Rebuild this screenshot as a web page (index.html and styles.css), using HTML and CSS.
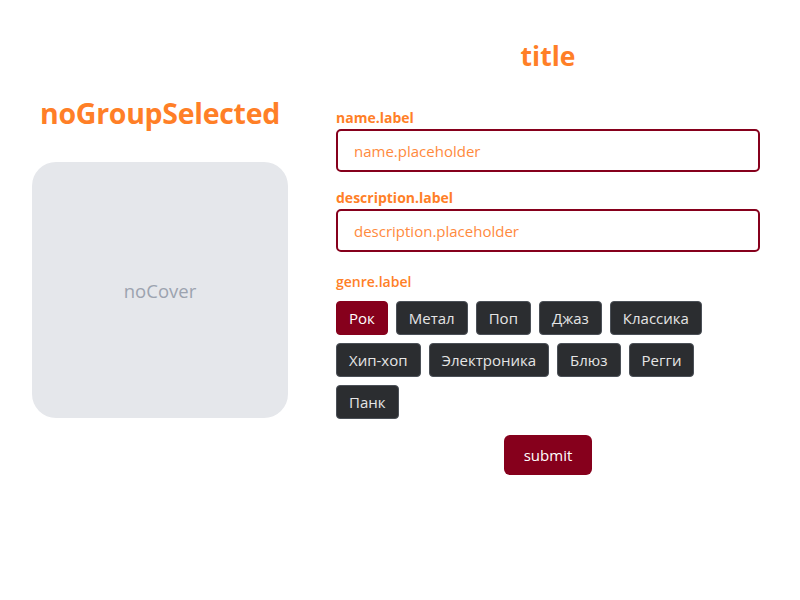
FILE: index.html
```html
<!DOCTYPE html>
<html>
<head>
<meta charset="utf-8">
<link rel="stylesheet" href="styles.css">
</head>
<body>
<div class="page">
  <div class="left">
    <h2 class="group-title">noGroupSelected</h2>
    <div class="cover">noCover</div>
  </div>
  <form class="right">
    <h1 class="title">title</h1>
    <div class="field">
      <label class="label">name.label</label>
      <input class="input" type="text" placeholder="name.placeholder">
    </div>
    <div class="field">
      <label class="label">description.label</label>
      <input class="input" type="text" placeholder="description.placeholder">
    </div>
    <div class="field genres-field">
      <label class="label light">genre.label</label>
      <div class="genres">
        <button type="button" class="genre active">Рок</button>
        <button type="button" class="genre">Метал</button>
        <button type="button" class="genre">Поп</button>
        <button type="button" class="genre">Джаз</button>
        <button type="button" class="genre">Классика</button>
        <button type="button" class="genre">Хип-хоп</button>
        <button type="button" class="genre">Электроника</button>
        <button type="button" class="genre">Блюз</button>
        <button type="button" class="genre">Регги</button>
        <button type="button" class="genre">Панк</button>
      </div>
    </div>
    <div class="actions">
      <button type="button" class="submit">submit</button>
    </div>
  </form>
</div>
</body>
</html>
```
FILE: styles.css
```css
* { box-sizing: border-box; }
html, body { margin: 0; padding: 0; background: #fff; }
body {
  font-family: "Open Sans", "Noto Sans", sans-serif;
  width: 800px;
  height: 600px;
}
.page {
  display: flex;
  align-items: center;
  gap: 48px;
  padding: 38px 40px 0 32px;
}
.left {
  width: 256px;
  display: flex;
  flex-direction: column;
  align-items: center;
}
.group-title {
  margin: 0 0 31px;
  font-size: 28.5px;
  font-weight: 700;
  color: #ff7f27;
  line-height: 36px;
  letter-spacing: -0.3px;
}
.cover {
  width: 256px;
  height: 256px;
  border-radius: 24px;
  background: #e5e7eb;
  color: #9ca3af;
  font-size: 18.5px;
  display: flex;
  align-items: center;
  justify-content: center;
}
.right {
  flex: 1;
  display: flex;
  flex-direction: column;
}
.title {
  margin: 0 0 34px;
  text-align: center;
  font-size: 26.5px;
  font-weight: 700;
  color: #ff7f27;
  line-height: 36px;
}
.field {
  display: flex;
  flex-direction: column;
  gap: 1px;
  margin-bottom: 16px;
}
.label {
  font-size: 14px;
  font-weight: 700;
  color: #ff7f27;
  line-height: 20px;
}
.label.light { font-weight: 600; }
.genres-field { margin-top: 4px; gap: 9px; }
.input {
  height: 43px;
  border: 2px solid #86001c;
  border-radius: 5px;
  padding: 0 16px;
  font-family: inherit;
  font-size: 15px;
  color: #ff7f27;
  outline: none;
}
.input::placeholder { color: #ff8a3d; }
.genres {
  display: flex;
  flex-wrap: wrap;
  gap: 8px;
}
.genre {
  height: 34px;
  padding: 0 12px;
  border: 1px solid #4b5057;
  border-radius: 4px;
  background: #2b2d30;
  color: #e5e5e5;
  font-family: inherit;
  font-size: 15px;
}
.genre.active {
  background: #86001c;
  border-color: #86001c;
  color: #fff;
}
.actions {
  display: flex;
  justify-content: center;
}
.submit {
  width: 88px;
  height: 40px;
  border: none;
  border-radius: 6px;
  background: #86001c;
  color: #fff;
  font-family: inherit;
  font-size: 15px;
}
```
